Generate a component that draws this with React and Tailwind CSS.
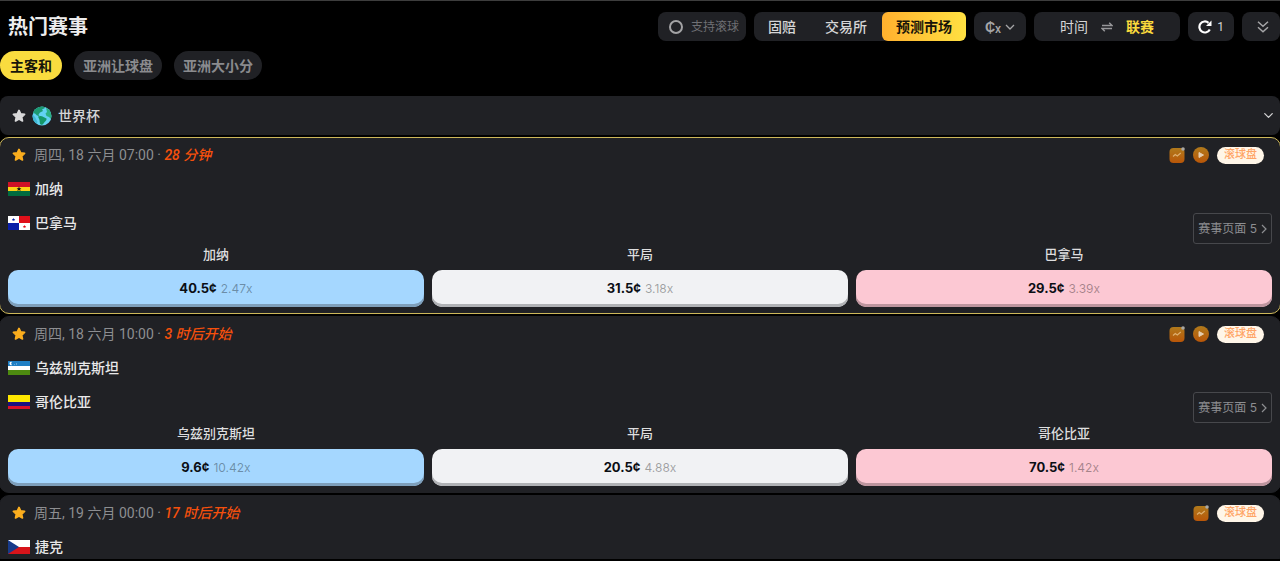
import React, { useState } from "react";
import { ChevronDown } from "lucide-react";

const marketTabs = ["主客和", "亚洲让球盘", "亚洲大小分"];
const oddsTypes = ["固赔", "交易所", "预测市场"];

const matches = [
  {
    id: 1,
    date: "周四, 18 六月 07:00",
    startsIn: "28 分钟",
    featured: true,
    video: true,
    teams: [
      { name: "加纳", flag: "gh" },
      { name: "巴拿马", flag: "pa" },
    ],
    pages: 5,
    odds: [
      { label: "加纳", price: "40.5¢", multi: "2.47x", type: "home" },
      { label: "平局", price: "31.5¢", multi: "3.18x", type: "draw" },
      { label: "巴拿马", price: "29.5¢", multi: "3.39x", type: "away" },
    ],
  },
  {
    id: 2,
    date: "周四, 18 六月 10:00",
    startsIn: "3 时后开始",
    video: true,
    teams: [
      { name: "乌兹别克斯坦", flag: "uz" },
      { name: "哥伦比亚", flag: "co" },
    ],
    pages: 5,
    odds: [
      { label: "乌兹别克斯坦", price: "9.6¢", multi: "10.42x", type: "home" },
      { label: "平局", price: "20.5¢", multi: "4.88x", type: "draw" },
      { label: "哥伦比亚", price: "70.5¢", multi: "1.42x", type: "away" },
    ],
  },
  {
    id: 3,
    date: "周五, 19 六月 00:00",
    startsIn: "17 时后开始",
    teams: [{ name: "捷克", flag: "cz" }],
    odds: [],
  },
];

const oddsColors = {
  home: "bg-[#a5d7ff] shadow-[inset_0_-3px_0_#7e9fbb]",
  draw: "bg-[#f1f2f4] shadow-[inset_0_-3px_0_#b0b2b5]",
  away: "bg-[#fcc8d3] shadow-[inset_0_-3px_0_#bd959e]",
};

const Star = ({ className }) => (
  <svg viewBox="0 0 24 24" className={className} fill="currentColor" stroke="currentColor" strokeWidth="3" strokeLinejoin="round">
    <path d="M12 2.500l2.800 6 6.700.8-4.900 4.600 1.300 6.600L12 17.300l-5.900 3.200 1.300-6.600-4.900-4.600 6.700-.8z" />
  </svg>
);

const Globe = () => (
  <svg viewBox="0 0 20 20" className="h-5 w-5">
    <defs>
      <clipPath id="globe-clip">
        <circle cx="10" cy="10" r="9.500" />
      </clipPath>
    </defs>
    <g clipPath="url(#globe-clip)">
      <rect width="20" height="20" fill="#62d2f2" />
      <path d="M0 7c1-4 4-7 9-7h3l1 2-3 1.500 1 1.500-3 1.500-1.500 2 1 1.500-2.500-.5L3 7.500z" fill="#1c9a72" />
      <path d="M6 10.500c2-1 4-.5 5.500.5l3 1.500c.5 2-2 3-2.500 4.500L10 19l-2-1-.5-4z" fill="#149768" />
      <path d="M14 2l4 2 2 6-1 3-2-2-2.500-1-1-2.500L15 6z" fill="#2bb183" />
      <path d="M0 8l3 3 2.500 5L4 18l-4-4z" fill="#3fb8d4" />
    </g>
  </svg>
);

const Flag = ({ code }) => (
  <svg viewBox="0 0 22 14" className="h-[14px] w-[22px] shrink-0">
    {code === "gh" && (
      <>
        <rect width="22" height="5" fill="#ce1126" />
        <rect y="5" width="22" height="4" fill="#fcd116" />
        <rect y="9" width="22" height="5" fill="#006b3f" />
        <path d="M11 4.600l.7 1.600h1.700l-1.300 1.100.5 1.700L11 8.100l-1.600.9.5-1.700-1.300-1.100h1.700z" fill="#111" />
      </>
    )}
    {code === "pa" && (
      <>
        <rect width="22" height="14" fill="#fff" />
        <rect x="11" width="11" height="7" fill="#e0101a" />
        <rect y="7" width="11" height="7" fill="#0a1fa8" />
        <path d="M5.500 2l.5 1.100h1.200l-1 .8.4 1.200-1.100-.7-1.100.7.4-1.200-1-.8H5z" fill="#0a1fa8" />
        <path d="M16.500 9l.5 1.100h1.200l-1 .8.4 1.200-1.100-.7-1.100.7.4-1.200-1-.8H16z" fill="#e0101a" />
      </>
    )}
    {code === "uz" && (
      <>
        <rect width="22" height="14" fill="#fff" />
        <rect width="22" height="5" fill="#1f7fc4" />
        <rect y="9" width="22" height="5" fill="#4d8a10" />
        <path d="M4 1a1.700 1.700 0 1 0 0 3 1.800 1.800 0 0 1 0-3z" fill="#fff" />
        <path d="M6 3.500h1M8 2.500h1M8 3.500h1" stroke="#8cc0e4" strokeWidth=".6" />
      </>
    )}
    {code === "co" && (
      <>
        <rect width="22" height="7" fill="#ffe800" />
        <rect y="7" width="22" height="4" fill="#1a1080" />
        <rect y="11" width="22" height="3" fill="#d8102a" />
      </>
    )}
    {code === "cz" && (
      <>
        <rect width="22" height="7" fill="#fff" />
        <rect y="7" width="22" height="7" fill="#d7141a" />
        <path d="M0 0l11 7L0 14z" fill="#173a8a" />
      </>
    )}
  </svg>
);

const StatsIcon = () => (
  <svg viewBox="0 0 16 16" className="h-4 w-4">
    <defs>
      <linearGradient id="stats-fill" x1="0" y1="0" x2="0" y2="1">
        <stop offset="0" stopColor="#b07a1c" />
        <stop offset="1" stopColor="#b95608" />
      </linearGradient>
    </defs>
    <rect x=".5" y="1" width="15" height="15" rx="4" fill="url(#stats-fill)" />
    <path d="M4 9.500l2.300-2 2 1.500 3.500-3" fill="none" stroke="#deb070" strokeWidth="1.200" />
    <circle cx="14" cy="2" r="1.800" fill="#a9a8a4" />
  </svg>
);

const PlayIcon = () => (
  <svg viewBox="0 0 16 16" className="h-4 w-4">
    <defs>
      <linearGradient id="play-fill" x1="0" y1="0" x2="0" y2="1">
        <stop offset="0" stopColor="#b07a1c" />
        <stop offset="1" stopColor="#b95608" />
      </linearGradient>
    </defs>
    <circle cx="8" cy="8" r="8" fill="url(#play-fill)" />
    <path d="M6 5.500l4.500 2.500L6 10.500z" fill="#e6ceb0" stroke="#e6ceb0" strokeLinejoin="round" />
  </svg>
);

const MatchCard = ({ match }) => (
  <article
    className={`-mx-px shrink-0 rounded-[10px] border bg-[#202125] ${
      match.featured ? "border-[#cdb85a]" : "border-[#202125]"
    }`}
  >
    <div className="flex h-[34px] items-center justify-between pl-3 pr-4">
      <div className="flex items-center gap-2">
        <button aria-label="收藏">
          <Star className="h-[14px] w-[14px] text-[#fbae1e]" />
        </button>
        <p className="text-sm text-[#8d8e91]">
          {match.date} · <span className="font-medium italic text-[#f6500c]">{match.startsIn}</span>
        </p>
      </div>
      <div className="flex items-center gap-2">
        <StatsIcon />
        {match.video && <PlayIcon />}
        <span className="flex h-[17px] items-center rounded-full bg-[#fff6e8] px-[7px] pt-px text-[11px] font-medium text-[#ffa566]">
          滚球盘
        </span>
      </div>
    </div>

    {/* Teams */}
    <div className="flex items-end justify-between px-2">
      <div>
        {match.teams.map((team) => (
          <div key={team.name} className="flex h-[34px] items-center gap-[5px] text-sm text-[#e8e8e9]">
            <Flag code={team.flag} />
            <span className="font-medium">{team.name}</span>
          </div>
        ))}
      </div>
      {match.pages && (
        <button className="-mb-1 flex h-[31px] items-center gap-1 rounded-[3px] border border-[#47484c] px-1 font-['Inter','Noto_Sans_CJK_SC',sans-serif] text-xs text-[#8d8e91]">
          赛事页面 {match.pages}
          <svg viewBox="0 0 6 10" className="h-[10px] w-[6px]" fill="none" stroke="currentColor" strokeWidth="1.200">
            <path d="M1 1l4 4-4 4" />
          </svg>
        </button>
      )}
    </div>

    {/* Odds */}
    {match.odds.length > 0 && (
      <div className="grid grid-cols-3 gap-2 px-2 pb-[6px]">
        {match.odds.map((odd) => (
          <div key={odd.type}>
            <div className="flex h-[30px] items-center justify-center text-[13px] font-medium text-[#dededf]">
              {odd.label}
            </div>
            <button
              className={`flex h-[37px] w-full items-center justify-center gap-1 rounded-[10px] font-['Inter',sans-serif] ${oddsColors[odd.type]}`}
            >
              <span className="text-[13px] font-bold text-[#0b0e14]">{odd.price}</span>
              <span className="text-xs text-black/35">{odd.multi}</span>
            </button>
          </div>
        ))}
      </div>
    )}
  </article>
);

const App = () => {
  const [market, setMarket] = useState("主客和");
  const [oddsType, setOddsType] = useState("预测市场");

  return (
    <div className="flex h-screen flex-col overflow-hidden border-t border-[#3d3d3d] bg-black pb-[2px] font-['Roboto','Noto_Sans_CJK_SC',sans-serif] text-[#d5d5d6]">
      {/* Header */}
      <header className="flex shrink-0 items-center justify-between pl-2 pt-[11px]">
        <h1 className="text-xl leading-7 font-bold text-[#ededed]">热门赛事</h1>
        <div className="flex h-[29px] items-stretch gap-2 text-sm">
          <label className="flex w-[88px] items-center gap-2 rounded-lg bg-[#202125] pl-[11px] text-xs text-[#6f7074]">
            <input
              type="checkbox"
              className="h-[14px] w-[14px] shrink-0 appearance-none rounded-full border-2 border-[#a3a3a5]"
            />
            支持滚球
          </label>
          <div className="flex w-[212px] justify-between rounded-lg bg-[#202125]">
            {oddsTypes.map((type) => (
              <button
                key={type}
                onClick={() => setOddsType(type)}
                className={`rounded-md px-[14px] ${
                  oddsType === type
                    ? "bg-gradient-to-r from-[#ffb02e] to-[#ffe142] font-bold text-[#171308]"
                    : "font-medium"
                }`}
              >
                {type}
              </button>
            ))}
          </div>
          <button className="flex w-[52px] items-center justify-center rounded-lg bg-[#202125] text-[#a5a5a7]">
            <span className="text-sm font-bold">₵</span>
            <span className="pt-1 text-xs font-medium">x</span>
            <svg viewBox="0 0 10 6" className="ml-1 h-[6px] w-[10px]" fill="none" stroke="currentColor" strokeWidth="1.300">
              <path d="M1 1l4 4 4-4" />
            </svg>
          </button>
          <button className="flex w-[146px] items-center justify-center gap-[13px] rounded-lg bg-[#202125]">
            <span>时间</span>
            <svg viewBox="0 0 12 10" className="h-[10px] w-3" fill="none" stroke="#97979a" strokeWidth="1.500">
              <path d="M1 3.500h10L8.200.8M11 6.500H1l2.800 2.700" />
            </svg>
            <span className="font-bold text-[#fbdb3c]">联赛</span>
          </button>
          <button className="flex w-[46px] items-center justify-center gap-[5px] rounded-lg bg-[#202125] text-xs">
            <svg viewBox="0 0 14 14" className="h-[14px] w-[14px]" fill="none" stroke="#fff" strokeWidth="2.200">
              <path d="M11.800 9.500A5.500 5.500 0 1 1 10.500 2.800" />
              <path d="M13.500.5v5.500H8z" fill="#fff" stroke="none" />
            </svg>
            1
          </button>
          <button aria-label="展开" className="flex w-[38px] items-center justify-center rounded-lg bg-[#202125] pl-1 text-[#a5a5a7]">
            <svg viewBox="0 0 12 12" className="h-3 w-3" fill="none" stroke="currentColor" strokeWidth="1.500">
              <path d="M1 .8l5 4.500 5-4.500M1 6.300l5 4.500 5-4.500" />
            </svg>
          </button>
        </div>
      </header>

      {/* Market tabs */}
      <nav className="mt-[10px] flex shrink-0 gap-3 text-sm font-bold">
        {marketTabs.map((tab) => (
          <button
            key={tab}
            onClick={() => setMarket(tab)}
            className={`h-[29px] rounded-full ${
              market === tab ? "bg-[#f9dc3f] px-[10px] text-[#17150a]" : "bg-[#202125] px-[9px] text-[#8a8b8e]"
            }`}
          >
            {tab}
          </button>
        ))}
      </nav>

      {/* League */}
      <div className="mt-4 flex h-[39px] shrink-0 items-center justify-between rounded-lg bg-[#202125] pl-3 pr-1">
        <div className="flex items-center gap-[6px] text-sm font-medium">
          <Star className="h-[14px] w-[14px] text-[#d9d9da]" />
          <Globe />
          世界杯
        </div>
        <button aria-label="收起">
          <ChevronDown size={15} />
        </button>
      </div>

      <main className="mt-[2px] flex min-h-0 flex-1 flex-col gap-[2px] overflow-hidden">
        {matches.map((match) => (
          <MatchCard key={match.id} match={match} />
        ))}
      </main>
    </div>
  );
};

export default App;
